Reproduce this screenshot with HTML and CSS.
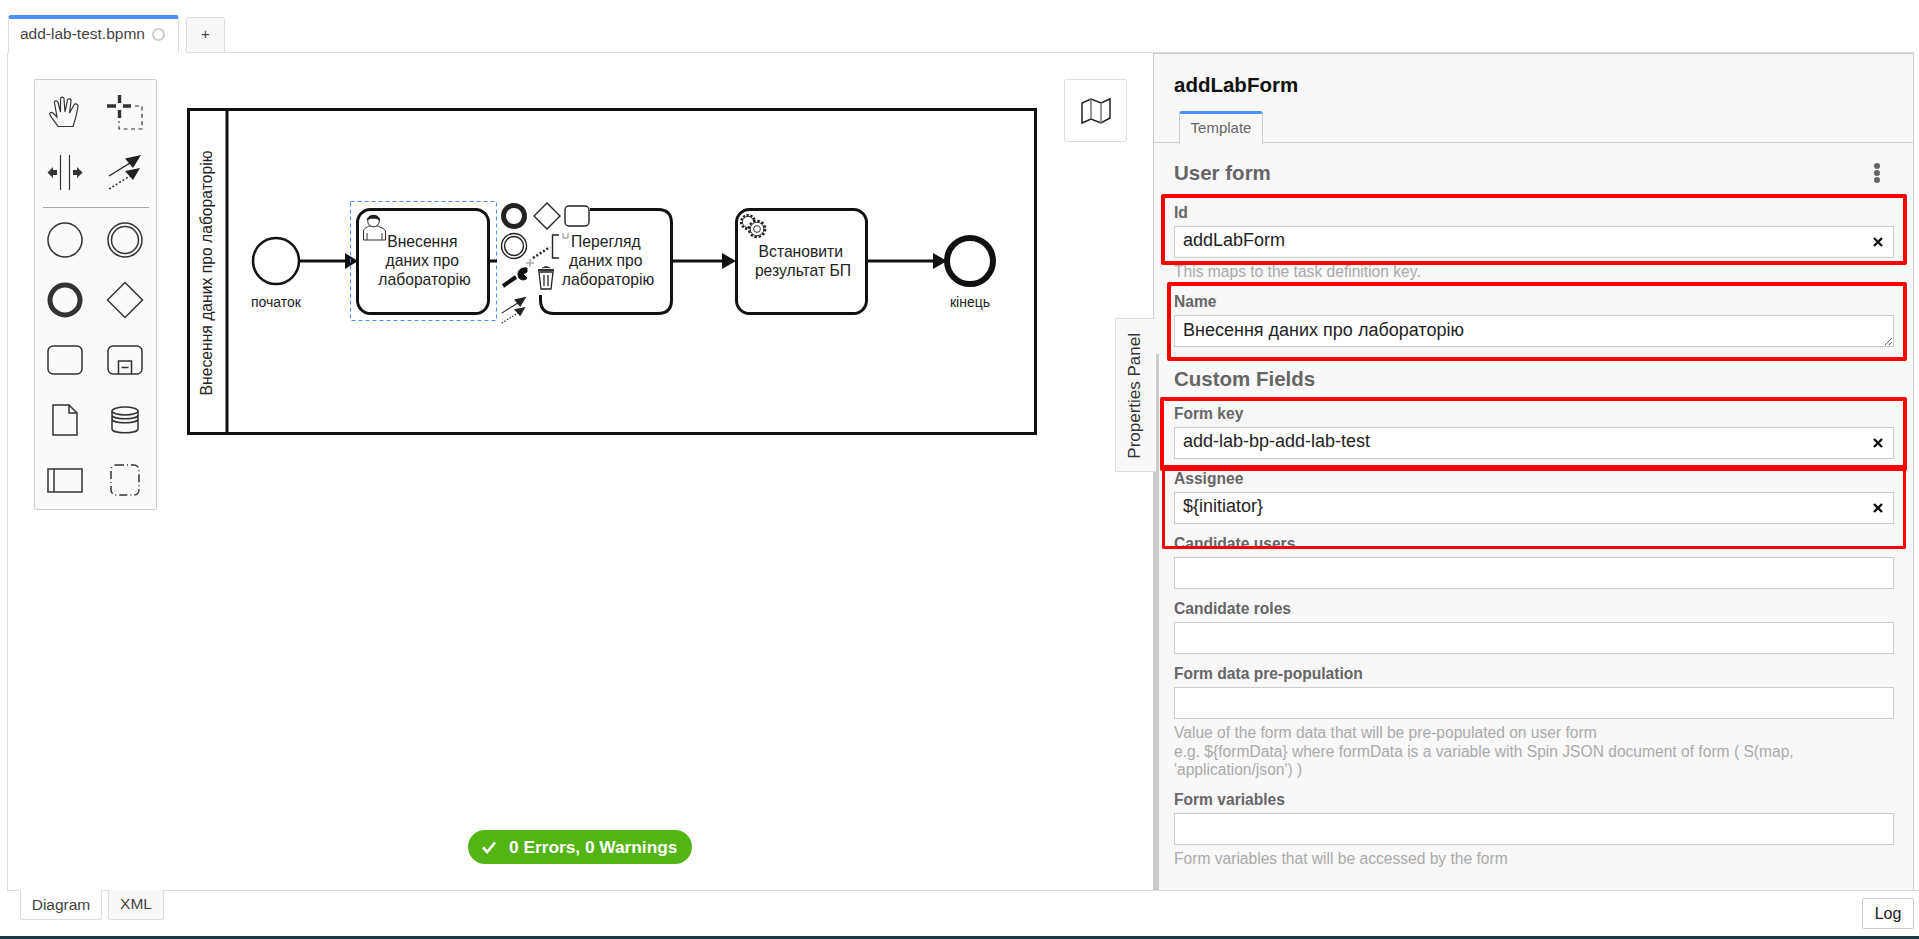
FILE: index.html
```html
<!DOCTYPE html>
<html lang="uk">
<head>
<meta charset="UTF-8">
<title>add-lab-test.bpmn</title>
<link rel="stylesheet" href="styles.css">
</head>
<body>
<svg class="defs" width="0" height="0">
	<symbol id="ico-connect" viewBox="0 0 44 44">
		<path d="M6 26 L27 13" fill="none" stroke="#222" stroke-width="1.4"/>
		<path d="M38 5 L22 8.5 L30 18 Z" fill="#222"/>
		<path d="M6 39 L27 26" fill="none" stroke="#222" stroke-width="1.4" stroke-dasharray="2 2"/>
		<path d="M37 18 L22 21 L30 30 Z" fill="#222"/>
	</symbol>
</svg>

<div class="app">
	<div class="top-tabs">
		<div class="file-tab">
			<span>add-lab-test.bpmn</span>
			<i class="dirty"></i>
		</div>
		<div class="add-tab">+</div>
		<div class="tabs-rest"></div>
	</div>

	<div class="workspace">
		<div class="canvas">
			<svg class="diagram" width="1146" height="837" viewBox="8 53 1146 837">
				<rect x="188.5" y="109.5" width="847" height="324" class="pool"/>
				<line x1="227" y1="109" x2="227" y2="434" class="pool"/>
				<text class="lbl" transform="translate(212 273) rotate(-90)" text-anchor="middle">Внесення даних про лабораторію</text>

				<circle cx="276" cy="261" r="23" class="shape start"/>
				<text class="lbl-sm" x="276" y="307" text-anchor="middle">початок</text>

				<line x1="300" y1="261" x2="346" y2="261" class="flow"/>
				<path d="M358 261 L345 253 V269 Z" fill="#111"/>

				<rect x="357.5" y="209.5" width="131" height="104" rx="13" class="shape"/>
				<text class="lbl" text-anchor="middle">
					<tspan x="424.5" y="247">Внесення</tspan>
					<tspan x="424.5" y="266">даних про</tspan>
					<tspan x="424.5" y="285">лабораторію</tspan>
				</text>
				<!-- user task marker -->
				<path d="M363.5 240 V231 C364 228 367 227.5 369 226 H378 C380 227.5 384 228 385.5 231 V240 Z M367 240 V233 M382 240 V233" fill="#fff" stroke="#333" stroke-width="1"/>
				<circle cx="373.5" cy="221" r="5.8" fill="#fff" stroke="#333" stroke-width="1"/>
				<path d="M367.5 220 C367 214 380 214 379.5 220 C377 217.5 370 217.5 367.5 220 Z" fill="#222" stroke="#222"/>

				<rect x="350.5" y="201.5" width="146" height="119" class="select"/>

				<line x1="489" y1="261" x2="497" y2="261" class="flow"/>

				<!-- second task, its corner sits under the context pad -->
				<path d="M590 209.5 H658 Q671.5 209.5 671.5 223 V300 Q671.5 313.5 658 313.5 H554 Q540.5 313.5 540.5 300 V295" class="shape"/>
				<text class="lbl" text-anchor="middle">
					<tspan x="608" y="247">Перегляд</tspan>
					<tspan x="608" y="266">даних про</tspan>
					<tspan x="608" y="285">лабораторію</tspan>
				</text>

				<line x1="672" y1="261" x2="724" y2="261" class="flow"/>
				<path d="M736 261 L722 253 V269 Z" fill="#111"/>

				<rect x="736.5" y="209.5" width="130" height="104" rx="13" class="shape"/>
				<text class="lbl" text-anchor="middle">
					<tspan x="803" y="257">Встановити</tspan>
					<tspan x="803" y="276">результат БП</tspan>
				</text>
				<!-- service task marker -->
				<circle cx="748" cy="222" r="6.8" fill="#fff" stroke="#222" stroke-width="2.6" stroke-dasharray="2.2 1.6"/>
				<circle cx="748" cy="222" r="5.6" fill="#fff" stroke="#333" stroke-width="1"/>
				<circle cx="757" cy="229" r="8" fill="#fff" stroke="#222" stroke-width="2.6" stroke-dasharray="2.4 1.8"/>
				<circle cx="757" cy="229" r="6.8" fill="#fff" stroke="#333" stroke-width="1"/>
				<circle cx="757" cy="229" r="3.4" fill="#fff" stroke="#333" stroke-width="1"/>

				<line x1="867" y1="261" x2="935" y2="261" class="flow"/>
				<path d="M947 261 L933 253 V269 Z" fill="#111"/>

				<circle cx="970" cy="261" r="23" class="shape end"/>
				<text class="lbl-sm" x="970" y="307" text-anchor="middle">кінець</text>

				<!-- context pad -->
				<circle cx="514" cy="216" r="10.5" class="pad thick"/>
				<path d="M547 203 L560 216 L547 229 L534 216 Z" class="pad"/>
				<rect x="565" y="206" width="24" height="20" rx="4" class="pad"/>
				<circle cx="514" cy="246" r="12.5" class="pad"/>
				<circle cx="514" cy="246" r="9.5" class="pad"/>
				<path d="M559 235 H552.5 V258 H559" class="pad"/>
				<path d="M533 258 L550 247" fill="none" stroke="#222" stroke-width="2.5" stroke-dasharray="2 2"/>
				<path d="M563 233 V238 H568 V233" fill="none" stroke="#888" stroke-width="1"/>
				<path d="M530 259 V267 M526 263 H534" stroke="#aaa" stroke-width="1.5"/>
				<path d="M503 286 L516 277" stroke="#111" stroke-width="4"/>
				<path d="M527 268 C520 267 516 272 519 278 C522 281 526 280 527 278 L523 274 L527 272 Z" fill="#111" stroke="#111"/>
				<path d="M538 270 H554" stroke="#333" stroke-width="2"/>
				<path d="M542 268 Q546 265 550 268" fill="#333" stroke="#333"/>
				<path d="M539 272 L541 289 H551 L553 272 Z M544 275 V286 M548 275 V286" fill="none" stroke="#222" stroke-width="1.3"/>
				<use href="#ico-connect" x="497" y="293" width="34" height="34"/>
			</svg>

			<div class="toolbar">
				<div class="tool-grid top">
					<svg viewBox="0 0 44 44" width="44" height="44" class="tool">
						<path d="M15 38.5 C12 34 9 31 7 27 C6 25 8 23.5 10 25 L14 29 L11.5 15 C11 12.5 14 12 15 14.5 L17.5 24 L17.5 11 C17.5 8.5 21 8.5 21 11 L22 24 L24.5 12 C25 10 28.5 10.5 28 13 L26.5 25 L31 17 C32 15 35.5 16 35 18.5 C34 25 32 33 30 38.5 Z" class="ln thin"/>
					</svg>
					<svg viewBox="0 0 44 44" width="44" height="44" class="tool">
						<path d="M16.5 7 V15 M16.5 22 V30 M4 18 H13 M20 18 H28" stroke="#333" stroke-width="3.4" fill="none"/>
						<path d="M32 18 H39 V41 H16 V33" class="ln thin" stroke-dasharray="4 3.4"/>
					</svg>
					<svg viewBox="0 0 44 44" width="44" height="44" class="tool">
						<path d="M17.5 5 V40 M26.5 5 V40" class="ln thin"/>
						<path d="M4.5 22.5 L10 17 V20 H14 V25 H10 V28 Z M39.5 22.5 L34 17 V20 H30 V25 H34 V28 Z" fill="#333"/>
					</svg>
					<svg viewBox="0 0 44 44" width="44" height="44" class="tool"><use href="#ico-connect"/></svg>
				</div>
				<hr class="tool-sep">
				<div class="tool-grid">
					<svg viewBox="0 0 44 44" width="44" height="44" class="tool"><circle cx="22" cy="22" r="17" class="ln"/></svg>
					<svg viewBox="0 0 44 44" width="44" height="44" class="tool"><circle cx="22" cy="22" r="17" class="ln"/><circle cx="22" cy="22" r="13.5" class="ln"/></svg>
					<svg viewBox="0 0 44 44" width="44" height="44" class="tool"><circle cx="22" cy="22" r="15" fill="none" stroke="#333" stroke-width="5"/></svg>
					<svg viewBox="0 0 44 44" width="44" height="44" class="tool"><path d="M22 4.5 L39.5 22 L22 39.5 L4.5 22 Z" class="ln"/></svg>
					<svg viewBox="0 0 44 44" width="44" height="44" class="tool"><rect x="5" y="8" width="34" height="28" rx="5" class="ln"/></svg>
					<svg viewBox="0 0 44 44" width="44" height="44" class="tool"><rect x="5" y="8" width="34" height="28" rx="5" class="ln"/><path d="M15.5 36 V23 H28.5 V36 M18.5 29.5 H25.5" class="ln"/></svg>
					<svg viewBox="0 0 44 44" width="44" height="44" class="tool"><path d="M10 7 H26 L34 15 V37 H10 Z M26 7 V15 H34" class="ln"/></svg>
					<svg viewBox="0 0 44 44" width="44" height="44" class="tool"><ellipse cx="22" cy="13" rx="13" ry="4" class="ln"/><path d="M9 13 V31 C9 36 35 36 35 31 V13 M9 17 C9 22 35 22 35 17 M9 21 C9 26 35 26 35 21" class="ln"/></svg>
					<svg viewBox="0 0 44 44" width="44" height="44" class="tool"><rect x="5" y="11" width="34" height="23" class="ln"/><path d="M11 11 V34" class="ln"/></svg>
					<svg viewBox="0 0 44 44" width="44" height="44" class="tool"><rect x="8" y="7" width="28" height="30" rx="5" class="ln" stroke-dasharray="8 3 1 3"/></svg>
				</div>
			</div>

			<div class="map-btn">
				<svg viewBox="0 0 32 28" width="32" height="28">
					<path d="M2 6 L11 2 L21 6 L30 2 V21 L21 26 L11 22 L2 26 Z" fill="none" stroke="#222" stroke-width="1.5"/>
					<path d="M11 2 V22 M21 6 V26" fill="none" stroke="#777" stroke-width="1.5"/>
				</svg>
			</div>

			<div class="lint-badge">
				<svg viewBox="0 0 16 16" width="16" height="16"><path d="M2 8.5 L6.2 13 L14 3.5" fill="none" stroke="#fff" stroke-width="2.6"/></svg>
				<span>0 Errors, 0 Warnings</span>
			</div>
		</div>

		<div class="props-toggle"><span>Properties Panel</span></div>

		<div class="props">
			<div class="props-head">
				<div class="props-title">addLabForm</div>
				<div class="props-tabs"><div class="props-tab">Template</div></div>
			</div>

			<div class="props-body">
				<div class="group">
					<div class="group-title">
						<span>User form</span>
						<span class="dots"><i></i><i></i><i></i></span>
					</div>
					<div class="field">
						<label>Id</label>
						<div class="input-wrap">
							<input type="text" value="addLabForm" readonly>
							<svg class="clear" viewBox="0 0 10 10" width="10" height="10"><path d="M1 1 L9 9 M9 1 L1 9"/></svg>
						</div>
						<div class="help">This maps to the task definition key.</div>
					</div>
					<div class="field">
						<label>Name</label>
						<textarea readonly>Внесення даних про лабораторію</textarea>
					</div>
				</div>

				<div class="group last">
					<div class="group-title"><span>Custom Fields</span></div>
					<div class="field">
						<label>Form key</label>
						<div class="input-wrap">
							<input type="text" value="add-lab-bp-add-lab-test" readonly>
							<svg class="clear" viewBox="0 0 10 10" width="10" height="10"><path d="M1 1 L9 9 M9 1 L1 9"/></svg>
						</div>
					</div>
					<div class="field">
						<label>Assignee</label>
						<div class="input-wrap">
							<input type="text" value="${initiator}" readonly>
							<svg class="clear" viewBox="0 0 10 10" width="10" height="10"><path d="M1 1 L9 9 M9 1 L1 9"/></svg>
						</div>
					</div>
					<div class="field">
						<label>Candidate users</label>
						<div class="input-wrap"><input type="text" readonly></div>
					</div>
					<div class="field">
						<label>Candidate roles</label>
						<div class="input-wrap"><input type="text" readonly></div>
					</div>
					<div class="field">
						<label>Form data pre-population</label>
						<div class="input-wrap"><input type="text" readonly></div>
						<div class="help">Value of the form data that will be pre-populated on user form<br>e.g. ${formData} where formData is a variable with Spin JSON document of form ( S(map, 'application/json') )</div>
					</div>
					<div class="field">
						<label>Form variables</label>
						<div class="input-wrap"><input type="text" readonly></div>
						<div class="help">Form variables that will be accessed by the form</div>
					</div>
				</div>
			</div>

			<!-- red marks drawn over the screenshot -->
			<div class="mark mark-id"></div>
			<div class="mark mark-name"></div>
			<div class="mark mark-key"></div>
			<div class="mark mark-assignee"></div>
		</div>
	</div>

	<div class="bottom-bar">
		<div class="view-tabs">
			<div class="view-tab active">Diagram</div>
			<div class="view-tab">XML</div>
		</div>
		<div class="log-btn">Log</div>
	</div>
	<div class="taskbar"></div>
</div>
</body>
</html>
```

FILE: styles.css
```css
html, body {
	margin: 0;
	padding: 0;
	height: 100%;
	overflow: hidden;
	background: #fff;
	font-family: "Liberation Sans", Arial, sans-serif;
	color: #333;
}
.defs {
	display: block;
	height: 0;
}
.app {
	display: flex;
	flex-direction: column;
	height: 939px;
}

/* file tabs */
.top-tabs {
	display: flex;
	align-items: flex-end;
	height: 53px;
	padding-left: 8px;
	box-sizing: border-box;
	flex: none;
}
.file-tab {
	display: flex;
	align-items: center;
	gap: 7px;
	box-sizing: border-box;
	width: 171px;
	height: 38px;
	padding: 0 0 4px 11px;
	border: 1px solid #ddd;
	border-top: 4px solid #4d90ff;
	border-bottom: 0;
	border-radius: 3px 3px 0 0;
	font-size: 15.5px;
	color: #444;
}
.dirty {
	display: block;
	width: 9px;
	height: 9px;
	border: 2px solid #ccc;
	border-radius: 50%;
}
.add-tab {
	box-sizing: border-box;
	width: 39px;
	height: 36px;
	margin-left: 7px;
	border: 1px solid #ddd;
	border-bottom: 1px solid #ddd;
	border-radius: 3px 3px 0 0;
	background: #f8f8f8;
	text-align: center;
	line-height: 32px;
	font-size: 15px;
	color: #444;
}
.tabs-rest {
	flex: 1;
	margin-right: 5px;
	border-bottom: 1px solid #ddd;
}

/* main area */
.workspace {
	position: relative;
	display: flex;
	flex: none;
	height: 838px;
	margin-left: 7px;
	border-left: 1px solid #ddd;
	border-bottom: 1px solid #ddd;
	box-sizing: border-box;
}
.canvas {
	position: relative;
	flex: none;
	width: 1145px;
	height: 837px;
	overflow: hidden;
}
.diagram {
	display: block;
}
.diagram text {
	font-family: "Liberation Sans", Arial, sans-serif;
	fill: #222;
}
.lbl {
	font-size: 15.7px;
}
.lbl-sm {
	font-size: 14px;
}
.pool {
	fill: none;
	stroke: #111;
	stroke-width: 3;
}
.shape {
	fill: none;
	stroke: #111;
	stroke-width: 3;
}
.shape.start {
	stroke-width: 2.5;
}
.shape.end {
	stroke-width: 6;
}
.flow {
	stroke: #111;
	stroke-width: 3;
}
.select {
	fill: none;
	stroke: #4d90ff;
	stroke-width: 1;
	stroke-dasharray: 4 3;
}
.pad {
	fill: #fff;
	stroke: #222;
	stroke-width: 1.4;
}
.pad.thick {
	stroke-width: 5;
}

/* palette */
.toolbar {
	position: absolute;
	left: 26px;
	top: 26px;
	box-sizing: border-box;
	width: 123px;
	height: 431px;
	padding: 8px 0 0 8px;
	background: #fafafa;
	border: 1px solid #ccc;
	border-radius: 2px;
}
.tool-grid {
	display: grid;
	grid-template-columns: 60px 60px;
	grid-auto-rows: 60px;
}
.tool-grid.top {
	grid-auto-rows: 62px;
}
.tool {
	display: block;
}
.ln {
	fill: none;
	stroke: #333;
	stroke-width: 1.5;
}
.ln.thin {
	stroke-width: 1.2;
}
.tool-sep {
	width: 106px;
	height: 0;
	margin: -5px 0 10px 0;
	border: 0;
	border-top: 1px solid #aaa;
}
.map-btn {
	position: absolute;
	left: 1056px;
	top: 26px;
	box-sizing: border-box;
	width: 63px;
	height: 63px;
	display: flex;
	align-items: center;
	justify-content: center;
	background: #fff;
	border: 1px solid #ddd;
	border-radius: 2px;
}
.lint-badge {
	position: absolute;
	left: 460px;
	top: 777px;
	box-sizing: border-box;
	width: 224px;
	height: 34px;
	display: flex;
	align-items: center;
	gap: 12px;
	padding-left: 13px;
	background: #52b415;
	border-radius: 17px;
	color: #fff;
	font-size: 17.3px;
	font-weight: bold;
	white-space: nowrap;
}

/* properties panel */
.props-toggle {
	position: absolute;
	left: 1107px;
	top: 265px;
	box-sizing: border-box;
	width: 41px;
	height: 154px;
	padding: 2px 3px 0 0;
	background: #f8f8f8;
	border: 1px solid #ddd;
	border-right: 0;
	border-radius: 2px 0 0 2px;
	display: flex;
	align-items: center;
	justify-content: center;
	z-index: 2;
}
.props-toggle span {
	writing-mode: vertical-rl;
	transform: rotate(180deg);
	font-size: 17px;
	color: #333;
	white-space: nowrap;
}
.props {
	position: relative;
	box-sizing: border-box;
	display: flex;
	flex-direction: column;
	flex: none;
	width: 761px;
	height: 837px;
	background: #f8f8f8;
	border: 1px solid #ccc;
	border-bottom: 0;
	overflow: hidden;
}
.props-head {
	box-sizing: border-box;
	flex: none;
	height: 89px;
	padding: 19px 0 0 20px;
	border-bottom: 1px solid #ccc;
}
.props-title {
	font-size: 20.5px;
	line-height: 24px;
	font-weight: bold;
	color: #111;
}
.props-tabs {
	display: flex;
	margin-top: 14px;
	margin-left: 5px;
}
.props-tab {
	box-sizing: border-box;
	width: 84px;
	height: 33px;
	border: 1px solid #ccc;
	border-top: 3px solid #4d90ff;
	border-bottom: 0;
	border-radius: 3px 3px 0 0;
	background: #f8f8f8;
	text-align: center;
	font-size: 15px;
	line-height: 27px;
	color: #666;
}
.props-body {
	display: flex;
	flex-direction: column;
	flex: 1;
}
.group {
	flex: none;
	height: 211px;
	padding: 18px 19px 0 20px;
	box-sizing: border-box;
	border-bottom: 1px solid #eee;
}
.group.last {
	flex: 1;
	height: auto;
	padding: 13px 19px 0 15px;
	border-left: 5px solid #ccc;
	border-bottom: 0;
}
.group-title {
	display: flex;
	justify-content: space-between;
	align-items: center;
	height: 24px;
	font-size: 20.5px;
	font-weight: bold;
	color: #666;
}
.dots {
	display: flex;
	flex-direction: column;
	gap: 1px;
	margin-right: 14px;
}
.dots i {
	display: block;
	width: 6px;
	height: 6px;
	border-radius: 50%;
	background: #666;
}
.field {
	margin-top: 9px;
}
.group-title + .field {
	margin-top: 17px;
}
.group.last .group-title + .field {
	margin-top: 12px;
}
.field label {
	display: block;
	height: 20px;
	line-height: 22px;
	margin-bottom: 4px;
	font-size: 15.6px;
	font-weight: bold;
	color: #666;
}
.input-wrap {
	position: relative;
}
.field input, .field textarea {
	display: block;
	box-sizing: border-box;
	width: 720px;
	height: 32px;
	margin: 0;
	padding: 0 8px 3px;
	background: #fff;
	border: 1px solid #ccc;
	border-radius: 0;
	outline: 0;
	font-family: inherit;
	font-size: 18px;
	color: #222;
}
.field textarea {
	padding-top: 3px;
	line-height: 22px;
	resize: vertical;
}
.clear {
	position: absolute;
	right: 11px;
	top: 11px;
	fill: none;
	stroke: #111;
	stroke-width: 2.4;
}
.help {
	margin-top: 5px;
	font-size: 15.6px;
	line-height: 18.5px;
	color: #aaa;
}

/* red marks */
.mark {
	position: absolute;
	box-sizing: border-box;
	border: 4px solid #f00;
	border-radius: 2px;
}
.mark-id {
	left: 7px;
	top: 140px;
	width: 746px;
	height: 71px;
}
.mark-name {
	left: 13px;
	top: 228px;
	width: 740px;
	height: 79px;
}
.mark-key {
	left: 6px;
	top: 343px;
	width: 747px;
	height: 74px;
	border-width: 4px 4px 6px 4px;
}
.mark-assignee {
	left: 8px;
	top: 411px;
	width: 744px;
	height: 84px;
	border-width: 0 3px 3px 3px;
}

/* bottom */
.bottom-bar {
	position: relative;
	display: flex;
	justify-content: space-between;
	flex: 1;
	padding: 0 5px 0 20px;
}
.view-tabs {
	display: flex;
	gap: 6px;
	margin-top: -1px;
}
.view-tab {
	box-sizing: border-box;
	width: 56px;
	height: 30px;
	border: 1px solid #ddd;
	border-top: 0;
	border-radius: 0 0 3px 3px;
	background: #f8f8f8;
	text-align: center;
	line-height: 28px;
	font-size: 15.5px;
	color: #444;
}
.view-tab.active {
	width: 82px;
	background: #fff;
	border-top: 1px solid #fff;
}
.log-btn {
	box-sizing: border-box;
	width: 52px;
	height: 31px;
	margin-top: 7px;
	border: 1px solid #ccc;
	border-radius: 2px;
	background: #fff;
	text-align: center;
	line-height: 29px;
	font-size: 16px;
	color: #222;
}
.taskbar {
	flex: none;
	height: 3px;
	background: #1f3a44;
}
```
